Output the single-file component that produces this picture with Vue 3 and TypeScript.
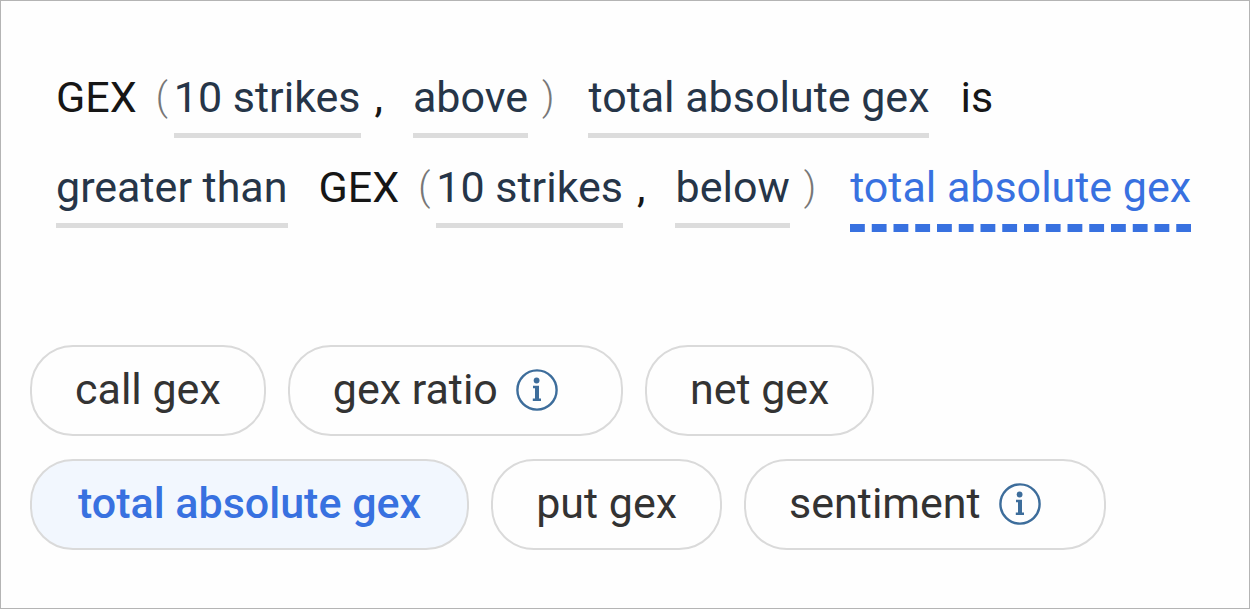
<script setup lang="ts">
import { ref } from 'vue'

type Part = { kind: 'label' | 'paren' | 'close' | 'comma' | 'token'; text: string; active?: boolean }

const parts: Part[] = [
  { kind: 'label', text: 'GEX' },
  { kind: 'paren', text: '(' },
  { kind: 'token', text: '10 strikes' },
  { kind: 'comma', text: ',' },
  { kind: 'token', text: 'above' },
  { kind: 'close', text: ')' },
  { kind: 'token', text: 'total absolute gex' },
  { kind: 'label', text: 'is' },
  { kind: 'token', text: 'greater than' },
  { kind: 'label', text: 'GEX' },
  { kind: 'paren', text: '(' },
  { kind: 'token', text: '10 strikes' },
  { kind: 'comma', text: ',' },
  { kind: 'token', text: 'below' },
  { kind: 'close', text: ')' },
  { kind: 'token', text: 'total absolute gex', active: true },
]

const options = [
  { name: 'call gex', info: false },
  { name: 'gex ratio', info: true },
  { name: 'net gex', info: false },
  { name: 'total absolute gex', info: false },
  { name: 'put gex', info: false },
  { name: 'sentiment', info: true },
]

const selected = ref('total absolute gex')

function tight(index: number): boolean {
  const next = parts[index + 1]
  return !!next && (next.kind === 'comma' || next.kind === 'close')
}
</script>

<template>
  <main class="panel">
    <div class="sentence">
      <template v-for="(part, i) in parts" :key="i">
        <button
          v-if="part.kind === 'token'"
          type="button"
          class="token"
          :class="{ active: part.active, tight: tight(i) }"
        >{{ part.text }}</button>
        <span v-else class="word" :class="part.kind">{{ part.text }}</span>
      </template>
    </div>

    <div class="options">
      <button
        v-for="option in options"
        :key="option.name"
        type="button"
        class="option"
        :class="{ selected: selected === option.name }"
        :aria-pressed="selected === option.name"
        @click="selected = option.name"
      >
        <span>{{ option.name }}</span>
        <svg v-if="option.info" class="info" viewBox="0 0 42 42" aria-hidden="true">
          <circle cx="21" cy="21" r="19.6" fill="none" stroke="currentColor" stroke-width="2.4" />
          <circle cx="20.6" cy="11.5" r="2.9" fill="currentColor" />
          <path d="M17 16.800h6v12.700h2v2.500h-8.200v-2.500h2.200v-10.200h-2z" fill="currentColor" />
        </svg>
      </button>
    </div>
  </main>
</template>

<style>
body {
  margin: 0;
  background: #fefefe;
}
</style>

<style scoped>
.panel {
  box-sizing: border-box;
  min-height: 100vh;
  padding: 66px 29px 56px;
  border: 1px solid #b4b4b4;
  background: #fefefe;
  font-family: Roboto, "Noto Sans", sans-serif;
  font-size: 43px;
  line-height: 60px;
  color: #161616;
}

button {
  margin: 0;
  font: inherit;
  cursor: pointer;
}

.sentence {
  display: flex;
  flex-wrap: wrap;
  align-items: flex-start;
  row-gap: 19px;
  padding-left: 26px;
}

.word,
.token {
  margin-right: 31px;
  white-space: pre;
}

.label:has(+ .paren) {
  margin-right: 19px;
}

.paren,
.close {
  font-size: 38px;
  font-weight: 300;
  color: #777777;
}

.paren {
  margin-right: 6px;
}

.comma {
  margin-right: 30px;
}

.close {
  margin-right: 34px;
}

.token {
  padding: 0 0 6px;
  border: 0;
  border-bottom: 5px solid #dcdcdc;
  background: none;
  color: #263548;
}

.token.tight {
  margin-right: 14px;
}

.token.active {
  margin-right: 0;
  padding-bottom: 15px;
  border-bottom: 0;
  background: linear-gradient(to right, #3871e0 15px, transparent 15px) left bottom / calc((100% + 7px) / 16) 8px repeat-x;
  color: #3871e0;
}

.options {
  display: flex;
  flex-wrap: wrap;
  gap: 23px 22px;
  margin-top: 113px;
}

.option {
  display: flex;
  align-items: center;
  padding: 12px 43px 15px;
  border: 2px solid #dadada;
  border-radius: 43px;
  background: #fefefe;
  color: #333333;
  white-space: nowrap;
}

.option.selected {
  padding-right: 46px;
  padding-left: 46px;
  background: #f2f7fe;
  font-weight: 500;
  color: #3871e0;
}

.info {
  width: 42px;
  height: 42px;
  margin: 2px 20px 0 18px;
  color: #3d6d9b;
}
</style>
